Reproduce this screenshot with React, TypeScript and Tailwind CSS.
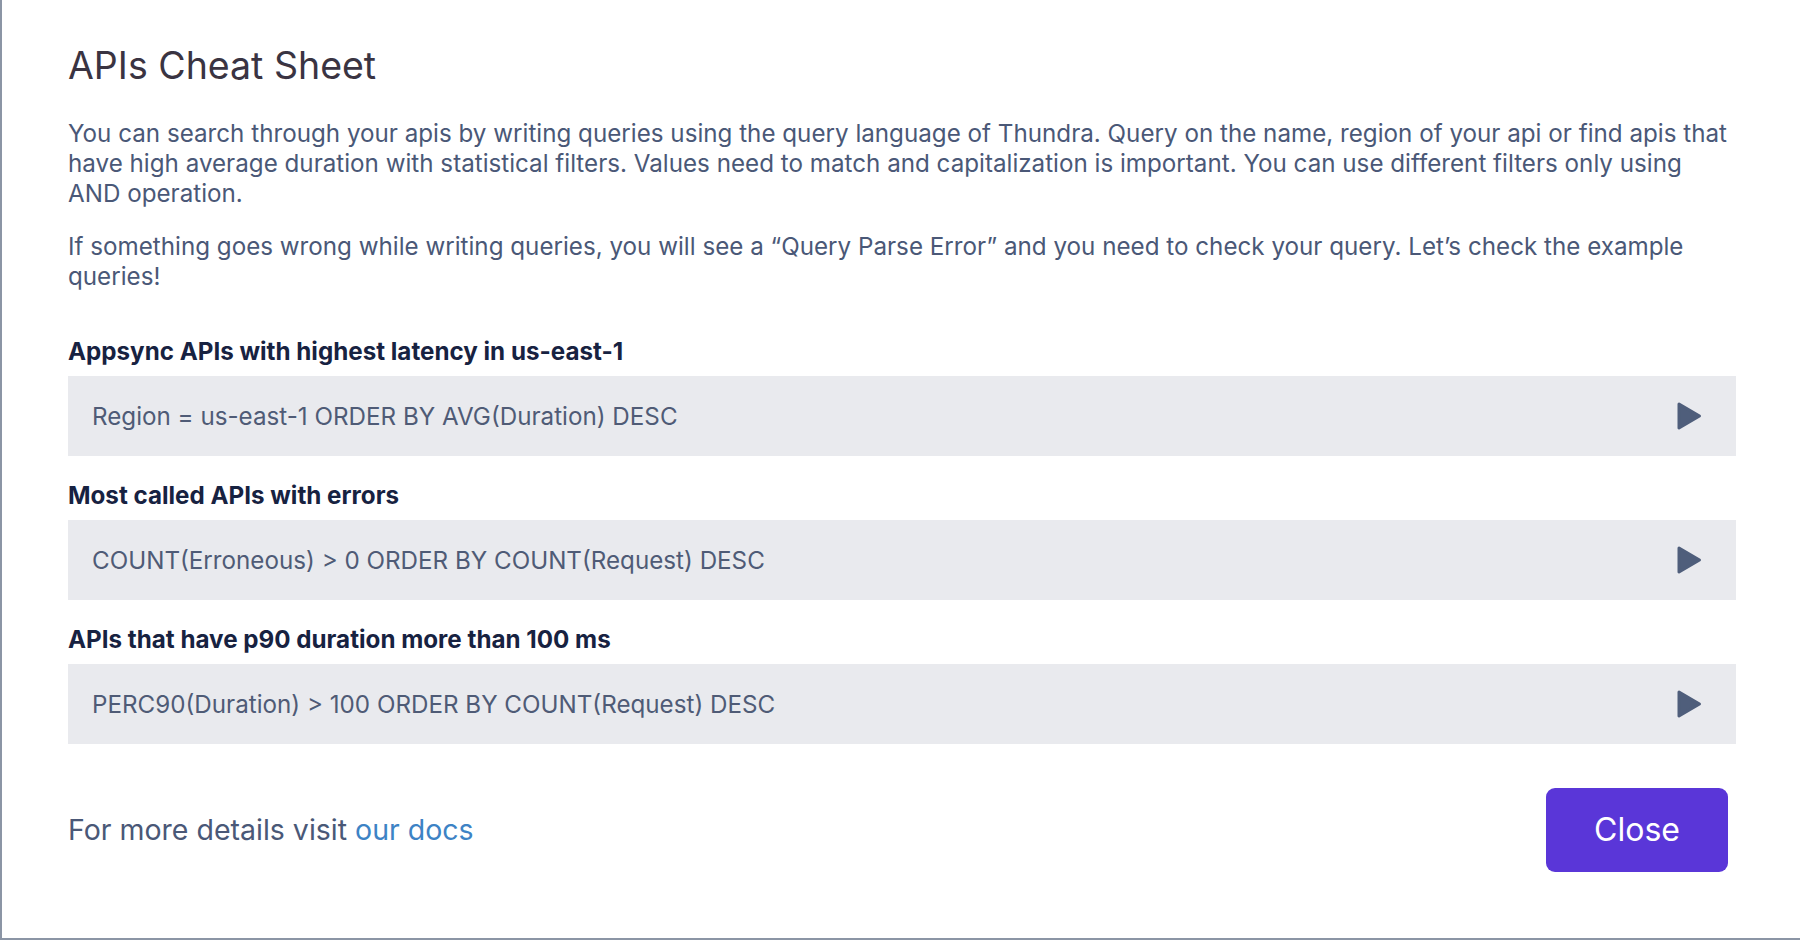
const examples = [
  {
    title: "Appsync APIs with highest latency in us-east-1",
    query: "Region = us-east-1 ORDER BY AVG(Duration) DESC",
  },
  {
    title: "Most called APIs with errors",
    query: "COUNT(Erroneous) > 0 ORDER BY COUNT(Request) DESC",
  },
  {
    title: "APIs that have p90 duration more than 100 ms",
    query: "PERC90(Duration) > 100 ORDER BY COUNT(Request) DESC",
  },
];

function PlayIcon() {
  return (
    <svg width="26" height="30" viewBox="0 0 26 30" className="shrink-0">
      <path
        d="M3 3 L23.5 15 L3 27 Z"
        fill="#4f5e7b"
        stroke="#4f5e7b"
        strokeWidth="3"
        strokeLinejoin="round"
      />
    </svg>
  );
}

export default function App() {
  return (
    <div
      className="h-[940px] w-[1800px] bg-white border-l-2 border-b-2 border-[#8b95a5] pl-[66px] pr-[64px] pt-[44px] flex flex-col"
      style={{ fontFamily: "Inter, 'Noto Sans', sans-serif" }}
    >
      <h1 className="text-[37.5px] leading-[44px] text-[#3a3442] font-normal">APIs Cheat Sheet</h1>

      <p className="mt-[31px] text-[24.2px] leading-[30px] text-[#4a5877]">
        You can search through your apis by writing queries using the query language of Thundra. Query on the
        name, region of your api or find apis that have high average duration with statistical filters. Values need to
        match and capitalization is important. You can use different filters only using AND operation.
      </p>
      <p className="mt-[23px] text-[24.2px] leading-[30px] text-[#4a5877]">
        If something goes wrong while writing queries, you will see a “Query Parse Error” and you need to check your
        query. Let’s check the example queries!
      </p>

      <div className="mt-[45px] flex flex-col gap-[25px]">
        {examples.map((ex) => (
          <div key={ex.title} className="flex flex-col gap-[9px]">
            <h3 className="text-[24.2px] leading-[30px] font-bold text-[#172241]">{ex.title}</h3>
            <div className="h-[80px] bg-[#e9eaee] flex items-center justify-between pl-[24px] pr-[34px]">
              <span className="pt-[3px] text-[24.2px] text-[#4f5b76]">{ex.query}</span>
              <PlayIcon />
            </div>
          </div>
        ))}
      </div>

      <div className="mt-[44px] flex items-center justify-between pr-[8px]">
        <p className="text-[28.5px] text-[#4a5877]">
          For more details visit <a className="text-[#3d83c5]">our docs</a>
        </p>
        <button className="w-[182px] h-[84px] rounded-[9px] bg-[#5a36d8] text-white text-[32px]">Close</button>
      </div>
    </div>
  );
}
